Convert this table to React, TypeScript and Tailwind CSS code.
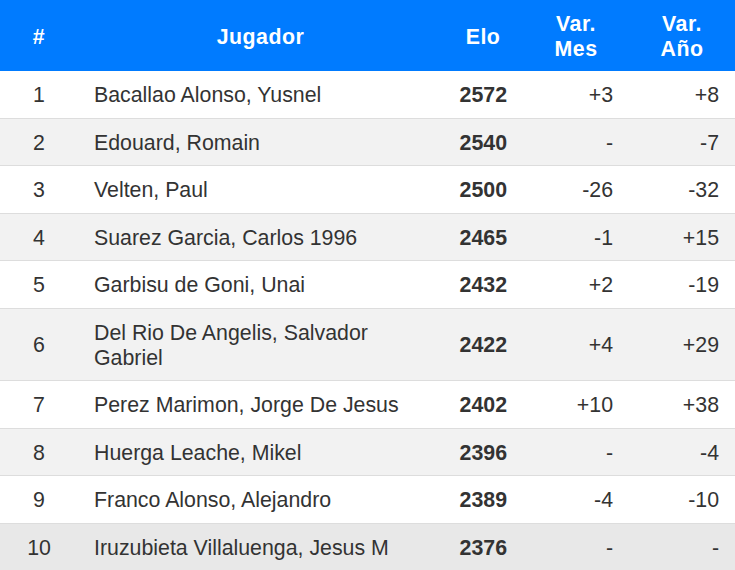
import React from "react";

const rows: [string, string, string, string, string][] = [
  ["1", "Bacallao Alonso, Yusnel", "2572", "+3", "+8"],
  ["2", "Edouard, Romain", "2540", "-", "-7"],
  ["3", "Velten, Paul", "2500", "-26", "-32"],
  ["4", "Suarez Garcia, Carlos 1996", "2465", "-1", "+15"],
  ["5", "Garbisu de Goni, Unai", "2432", "+2", "-19"],
  ["6", "Del Rio De Angelis, Salvador Gabriel", "2422", "+4", "+29"],
  ["7", "Perez Marimon, Jorge De Jesus", "2402", "+10", "+38"],
  ["8", "Huerga Leache, Mikel", "2396", "-", "-4"],
  ["9", "Franco Alonso, Alejandro", "2389", "-4", "-10"],
  ["10", "Iruzubieta Villaluenga, Jesus M", "2376", "-", "-"],
];

export default function App() {
  return (
    <div
      className="w-[735px] h-[570px] overflow-hidden bg-white text-[#333333] text-[21.33px] leading-[25px]"
      style={{ fontFamily: '"Liberation Sans", Arial, sans-serif' }}
    >
      <div className="grid grid-cols-[78px_365px_80px_106px_106px] bg-[#007bff] text-white font-bold text-center tracking-[0.5px] h-[71px]">
        <div className="px-4 pt-[3px] flex items-center justify-center">#</div>
        <div className="px-4 pt-[3px] flex items-center justify-center">Jugador</div>
        <div className="px-4 pt-[3px] flex items-center justify-center">Elo</div>
        <div className="px-4 pt-[3px] flex items-center justify-center">
          Var.
          <br />
          Mes
        </div>
        <div className="px-4 pt-[3px] flex items-center justify-center">
          Var.
          <br />
          Año
        </div>
      </div>
      {rows.map((r, i) => {
        const bg =
          i === 9 ? "bg-[#e8e8e8]" : i % 2 === 1 ? "bg-[#f2f2f2]" : "bg-white";
        return (
          <div
            key={r[0]}
            className={`grid grid-cols-[78px_365px_80px_106px_106px] items-center ${bg} ${
              i > 0 ? "border-t border-[#dddddd]" : ""
            }`}
          >
            <div className="px-4 pt-[12px] pb-[9.5px] text-center">{r[0]}</div>
            <div className="px-4 pt-[12px] pb-[9.5px]">{r[1]}</div>
            <div className="px-4 pt-[12px] pb-[9.5px] text-right font-bold">{r[2]}</div>
            <div className="px-4 pt-[12px] pb-[9.5px] text-right">{r[3]}</div>
            <div className="px-4 pt-[12px] pb-[9.5px] text-right">{r[4]}</div>
          </div>
        );
      })}
    </div>
  );
}
